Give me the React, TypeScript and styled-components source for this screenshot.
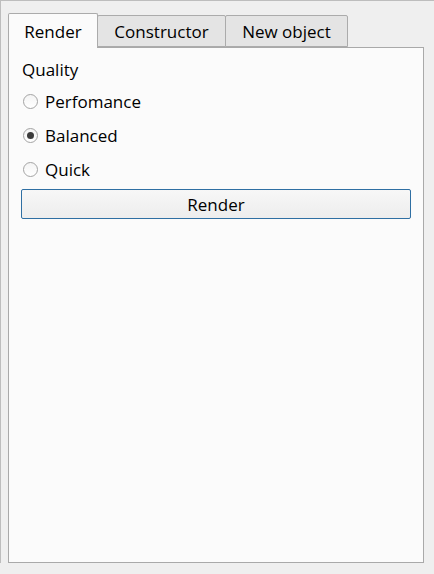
import React, { useState } from "react";
import styled, { createGlobalStyle } from "styled-components";

const Global = createGlobalStyle`
  html, body { margin: 0; padding: 0; background: #efefef; }
  body { font-family: "Open Sans", "Noto Sans", sans-serif; color: #000; }
`;

const Window = styled.div`
  box-sizing: border-box;
  width: 434px;
  height: 563px;
  border-top: 1px solid #bdbdbd;
  border-left: 1px solid #bdbdbd;
  padding: 11px 0 0 7px;
  display: flex;
  flex-direction: column;
`;

const TabBar = styled.div`
  display: flex;
  align-items: flex-end;
  height: 35px;
  position: relative;
  z-index: 1;
`;

const Tab = styled.div<{ $active?: boolean; $w: number }>`
  box-sizing: border-box;
  width: ${(p) => p.$w}px;
  height: ${(p) => (p.$active ? 35 : 32)}px;
  margin-bottom: ${(p) => (p.$active ? -1 : 0)}px;
  margin-left: ${(p) => (p.$active ? 0 : -1)}px;
  border: 1px solid #ababab;
  border-bottom: ${(p) => (p.$active ? "none" : "1px solid #ababab")};
  border-radius: 2px 2px 0 0;
  background: ${(p) => (p.$active ? "#fbfbfb" : "#e4e4e4")};
  display: flex;
  align-items: center;
  justify-content: center;
  padding-top: ${(p) => (p.$active ? 1 : 0)}px;
  font-size: 17px;
  color: #000;
  &:first-child { margin-left: 0; }
`;

const Pane = styled.div`
  box-sizing: border-box;
  width: 416px;
  height: 516px;
  background: #fbfbfb;
  border: 1px solid #a9a9a9;
  box-shadow: 0 1px 0 #c4c4c4;
  padding: 10px 12px 0 13px;
  display: flex;
  flex-direction: column;
`;

const Heading = styled.div`
  font-size: 17px;
  line-height: 23px;
  margin-bottom: 3px;
`;

const RadioRow = styled.label`
  display: flex;
  align-items: center;
  height: 34px;
  font-size: 17px;
  cursor: default;
`;

const RadioCircle = styled.span<{ $checked?: boolean }>`
  box-sizing: border-box;
  width: 15px;
  height: 15px;
  margin-left: 1px;
  margin-right: 7px;
  border-radius: 50%;
  border: 1px solid #a4a4a4;
  background: linear-gradient(#f4f4f4, #ffffff);
  display: flex;
  align-items: center;
  justify-content: center;
  &::after {
    content: "";
    display: ${(p) => (p.$checked ? "block" : "none")};
    width: 7px;
    height: 7px;
    border-radius: 50%;
    background: #3c3c3c;
  }
`;

const Button = styled.button`
  box-sizing: border-box;
  margin-top: 3px;
  width: 390px;
  height: 30px;
  border: 1px solid #2f6fa3;
  border-radius: 2px;
  background: linear-gradient(#f7f7f7, #ededed);
  font-family: "Open Sans", "Noto Sans", sans-serif;
  font-size: 17px;
  color: #000;
  margin-left: -1px;
  padding: 0;
`;

const options = ["Perfomance", "Balanced", "Quick"];

export default function App() {
  const [sel, setSel] = useState("Balanced");
  return (
    <>
      <Global />
      <Window>
        <TabBar>
          <Tab $active $w={90}>Render</Tab>
          <Tab $w={129}>Constructor</Tab>
          <Tab $w={123}>New object</Tab>
        </TabBar>
        <Pane>
          <Heading>Quality</Heading>
          {options.map((o) => (
            <RadioRow key={o} onClick={() => setSel(o)}>
              <RadioCircle $checked={sel === o} />
              {o}
            </RadioRow>
          ))}
          <Button>Render</Button>
        </Pane>
      </Window>
    </>
  );
}
